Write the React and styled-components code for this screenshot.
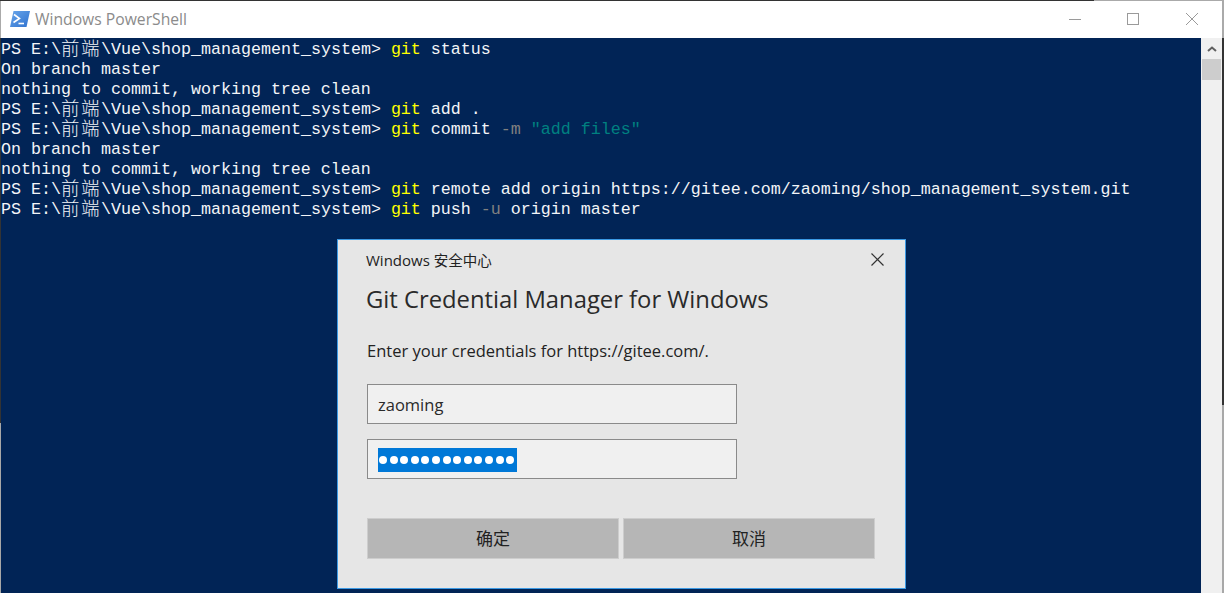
import React from "react";
import styled, { createGlobalStyle } from "styled-components";

const Global = createGlobalStyle`
  html, body { margin: 0; padding: 0; background: #012456; }
  body { width: 1224px; height: 593px; overflow: hidden; }
`;

const Win = styled.div`
  width: 1224px; height: 593px; display: flex; flex-direction: column; overflow: hidden;
`;
const TopEdge = styled.div`
  height: 1px; flex: none; background: linear-gradient(to right, #333 1094px, #aaa 1094px);
`;
const TitleBar = styled.header`
  height: 37px; flex: none; background: #fff; display: flex; align-items: center;
  padding: 0 1px 1px 9px; box-sizing: border-box;
  border-left: 1px solid #aaa; border-right: 2px solid #aaa;
`;
const TitleText = styled.span`
  margin-left: 5px; font: 15.7px "Open Sans", sans-serif; color: #8b8b8b; flex: 1;
`;
const WinBtn = styled.button`
  width: 58.5px; height: 36px; border: 0; padding: 0; background: none;
  display: flex; align-items: center; justify-content: center;
`;
const Body = styled.div`
  flex: 1; display: flex; position: relative; min-height: 0;
`;
const Edge = styled.div`
  width: ${p => p.$w}px; flex: none;
  background: linear-gradient(to bottom, #333 ${p => p.$split}px, #a8a8a8 ${p => p.$split}px);
`;
const Terminal = styled.pre`
  flex: 1; margin: 0; padding: 2px 0 0 0; background: #012456; color: #f3f5f8;
  font: 16.67px/20px "Liberation Mono", monospace;
`;
const Line = styled.div`height: 20px; white-space: pre;`;
const Cjk = styled.span`
  font: 300 18.5px/0 "Noto Sans CJK SC", sans-serif; letter-spacing: 1.5px; vertical-align: -1px;
`;
const Cmd = styled.span`color: #ffff00;`;
const Flag = styled.span`color: #808080;`;
const Str = styled.span`color: #008080;`;
const Scrollbar = styled.div`
  width: 21px; flex: none; background: #f0f0f0; display: flex; flex-direction: column; align-items: center;
`;
const ScrollUp = styled.div`height: 21px; display: flex; align-items: center; justify-content: center;`;
const Thumb = styled.div`width: 19px; height: 21px; background: #cdcdcd;`;

const Dialog = styled.div`
  position: absolute; left: 337px; top: 201px; width: 569px; height: 350px;
  box-sizing: border-box; background: #e6e6e6; border: 1px solid #3c9ae4;
  padding: 8px 29px 0 28px; font-family: "Open Sans", sans-serif; color: #222;
  display: flex; flex-direction: column;
`;
const DialogHead = styled.div`display: flex; justify-content: space-between; align-items: center; height: 22px; margin-right: -8px;`;
const DialogCaption = styled.span`font-size: 15px;`;
const CaptionCjk = styled.span`font: 14.5px "Noto Sans CJK SC", sans-serif;`;
const Close = styled.button`border: 0; background: none; padding: 0; display: flex;`;
const Heading = styled.h1`
  margin: 12px 0 0; font-size: 23.8px; line-height: 34px; font-weight: 400; color: #2a2a2a; white-space: nowrap;
`;
const Prompt = styled.p`margin: 24px 0 0 1px; font-size: 16.5px; line-height: 22px; color: #222; white-space: nowrap;`;
const Field = styled.div`
  margin: ${p => p.$top}px 0 0 1px; width: 370px; height: 40px; box-sizing: border-box;
  border: 1px solid #8a8a8a; background: #f0f0f0; padding: 0 10px;
  display: flex; align-items: center; font-size: 16.5px; color: #2a2a2a;
`;
const Selected = styled.span`
  height: 24px; width: 139px; margin-top: 2px; background: #0078d7; display: flex; align-items: center; gap: 2.6px; padding-left: 1px; box-sizing: border-box;
`;
const Dot = styled.i`width: 8px; height: 8px; border-radius: 50%; background: #fff; flex: none;`;
const Buttons = styled.div`display: flex; gap: 4px; margin: 39px 0 0 1px;`;
const Btn = styled.button`
  width: 252px; height: 41px; border: 1px solid #cdcdcd; background: #b6b6b6; padding: 0 0 2px;
  font: 17px "Noto Sans CJK SC", sans-serif; color: #222;
`;

const Ps = () => <>PS E:\<Cjk>前端</Cjk>\Vue\shop_management_system&gt; </>;

export default function App() {
  return (
    <Win>
      <Global />
      <TopEdge />
      <TitleBar>
        <svg width="20" height="16" viewBox="0 0 20 16">
          <defs>
            <linearGradient id="ps" x1="0" y1="0" x2="1" y2="1">
              <stop offset="0" stopColor="#6aa6ea" />
              <stop offset="1" stopColor="#2f72cf" />
            </linearGradient>
          </defs>
          <path d="M3.5 0H20L16.5 16H0Z" fill="url(#ps)" />
          <path d="M4 3.5L9.5 7.5L3.5 11.5" fill="none" stroke="#fff" strokeWidth="1.6" />
          <path d="M8.5 12.5H14" stroke="#fff" strokeWidth="1.6" />
        </svg>
        <TitleText>Windows PowerShell</TitleText>
        <WinBtn aria-label="Minimize">
          <svg width="12" height="12"><path d="M0 6.5H12" stroke="#9a9a9a" /></svg>
        </WinBtn>
        <WinBtn aria-label="Maximize">
          <svg width="12" height="12"><rect x=".5" y=".5" width="11" height="11" fill="none" stroke="#9a9a9a" /></svg>
        </WinBtn>
        <WinBtn aria-label="Close">
          <svg width="12" height="12"><path d="M0 0L12 12M12 0L0 12" stroke="#9a9a9a" /></svg>
        </WinBtn>
      </TitleBar>
      <Body>
        <Edge $w={1} $split={385} />
        <Terminal>
          <Line><Ps /><Cmd>git</Cmd> status</Line>
          <Line>On branch master</Line>
          <Line>nothing to commit, working tree clean</Line>
          <Line><Ps /><Cmd>git</Cmd> add .</Line>
          <Line><Ps /><Cmd>git</Cmd> commit <Flag>-m</Flag> <Str>"add files"</Str></Line>
          <Line>On branch master</Line>
          <Line>nothing to commit, working tree clean</Line>
          <Line><Ps /><Cmd>git</Cmd> remote add origin https://gitee.com/zaoming/shop_management_system.git</Line>
          <Line><Ps /><Cmd>git</Cmd> push <Flag>-u</Flag> origin master</Line>
        </Terminal>
        <Scrollbar>
          <ScrollUp>
            <svg width="10" height="6"><path d="M1 5L5 1.5L9 5" fill="none" stroke="#606060" strokeWidth="2" /></svg>
          </ScrollUp>
          <Thumb />
        </Scrollbar>
        <Edge $w={2} $split={367} />
        <Dialog>
          <DialogHead>
            <DialogCaption>Windows <CaptionCjk>安全中心</CaptionCjk></DialogCaption>
            <Close aria-label="Close">
              <svg width="13" height="13"><path d="M.5.5L12.5 12.5M12.5.5L.5 12.5" stroke="#333" strokeWidth="1.2" /></svg>
            </Close>
          </DialogHead>
          <Heading>Git Credential Manager for Windows</Heading>
          <Prompt>Enter your credentials for https://gitee.com/.</Prompt>
          <Field $top={22}>zaoming</Field>
          <Field $top={15}>
            <Selected>{Array.from({ length: 13 }, (_, i) => <Dot key={i} />)}</Selected>
          </Field>
          <Buttons>
            <Btn>确定</Btn>
            <Btn>取消</Btn>
          </Buttons>
        </Dialog>
      </Body>
    </Win>
  );
}
